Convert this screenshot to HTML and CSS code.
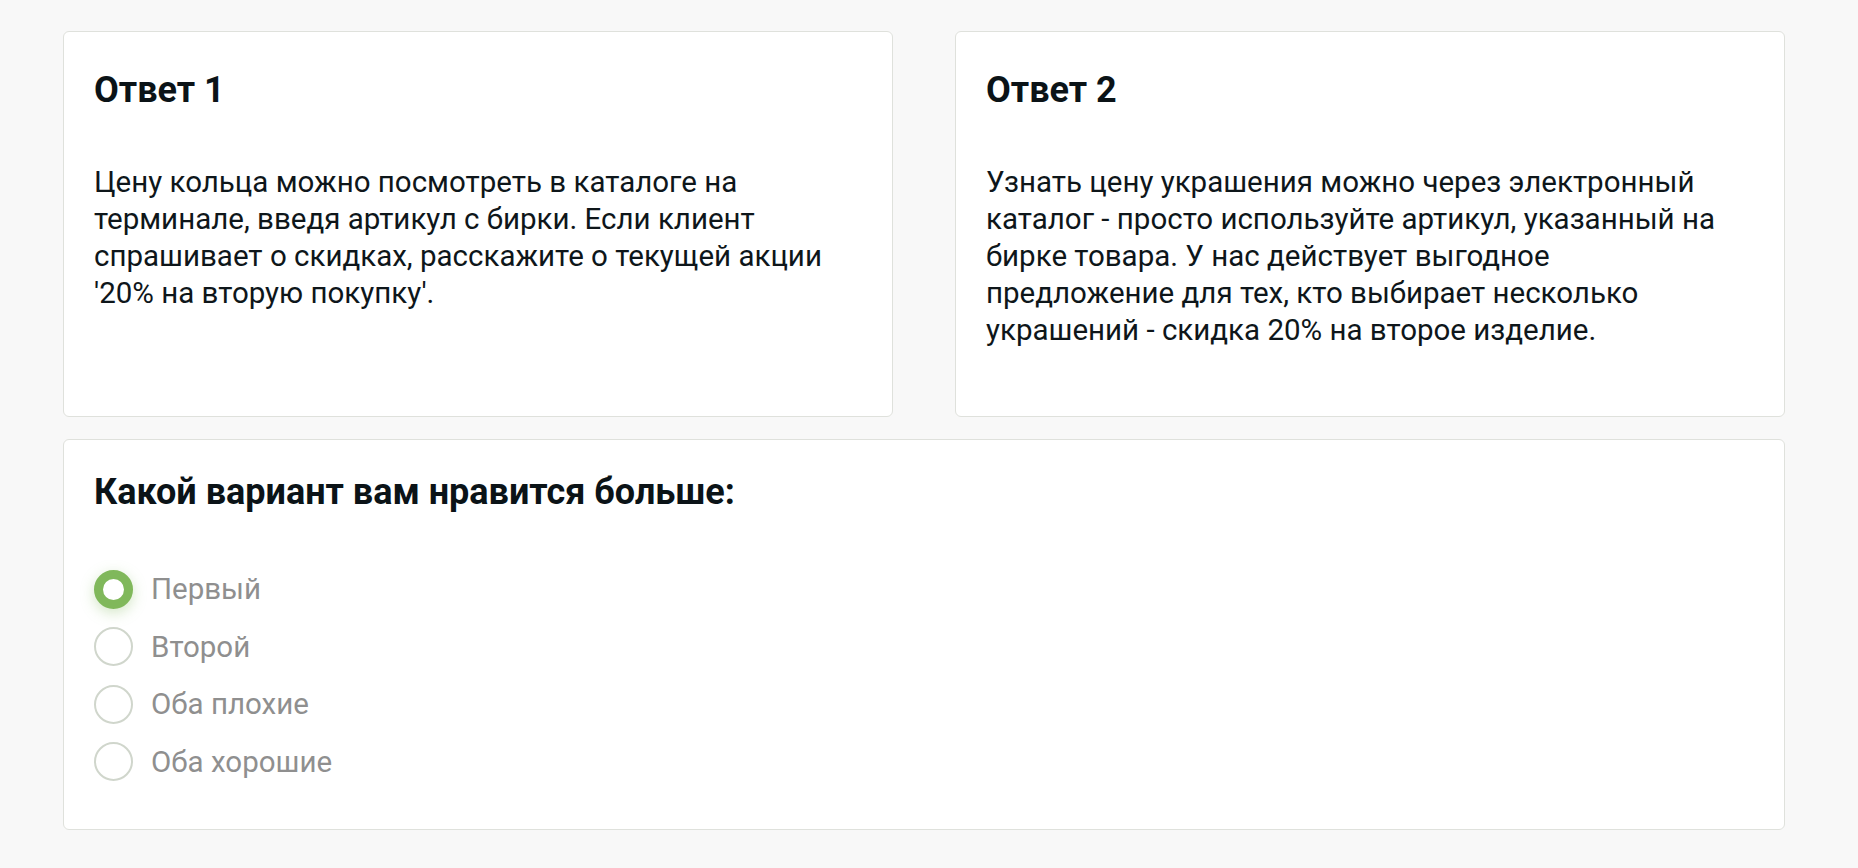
FILE: index.html
```html
<!DOCTYPE html>
<html lang="ru">
<head>
<meta charset="utf-8">
<title>Сравнение ответов</title>
<link rel="stylesheet" href="styles.css">
</head>
<body>
<main class="page">
  <section class="answers">
    <article class="card answer">
      <h2 class="card-title">Ответ 1</h2>
      <p class="answer-text">Цену кольца можно посмотреть в каталоге на терминале, введя артикул с бирки. Если клиент спрашивает о скидках, расскажите о текущей акции '20% на вторую покупку'.</p>
    </article>
    <article class="card answer">
      <h2 class="card-title">Ответ 2</h2>
      <p class="answer-text">Узнать цену украшения можно через электронный каталог - просто используйте артикул, указанный на бирке товара. У нас действует выгодное предложение для тех, кто выбирает несколько украшений - скидка 20% на второе изделие.</p>
    </article>
  </section>
  <section class="card poll">
    <h2 class="poll-title">Какой вариант вам нравится больше:</h2>
    <div class="options">
      <label class="option"><span class="radio checked"></span><span class="option-label">Первый</span></label>
      <label class="option"><span class="radio"></span><span class="option-label">Второй</span></label>
      <label class="option"><span class="radio"></span><span class="option-label">Оба плохие</span></label>
      <label class="option"><span class="radio"></span><span class="option-label">Оба хорошие</span></label>
    </div>
  </section>
</main>
</body>
</html>
```

FILE: styles.css
```css
* { box-sizing: border-box; }
html, body { margin: 0; padding: 0; }
body {
  background: #f8f8f8;
  font-family: Roboto, "Noto Sans", "Liberation Sans", sans-serif;
  color: #0e161a;
}
.page {
  width: 1722px;
  margin-left: 63px;
  padding-top: 31px;
  display: flex;
  flex-direction: column;
  gap: 22px;
}
.answers {
  display: grid;
  grid-template-columns: 830px 830px;
  column-gap: 62px;
}
.card {
  background: #ffffff;
  border: 1px solid #dfe1dc;
  border-radius: 6px;
}
.answer {
  padding: 37px 30px 67px 30px;
}
.card-title, .poll-title {
  margin: 0;
  font-size: 36px;
  line-height: 42px;
  font-weight: 700;
  color: #0b1317;
}
.card-title { margin-bottom: 53px; }
.answer-text {
  margin: 0;
  max-width: 759px;
  font-size: 29.5px;
  line-height: 37px;
  color: #0e161a;
}
.poll {
  padding: 31px 30px 48px 30px;
}
.options {
  margin-top: 57px;
  display: flex;
  flex-direction: column;
  gap: 19.5px;
}
.option {
  display: flex;
  align-items: center;
  gap: 18px;
  height: 38px;
}
.radio {
  width: 39px;
  height: 39px;
  border-radius: 50%;
  border: 2px solid #d0d6cc;
  background: #fff;
  flex: none;
}
.radio.checked {
  border: 9px solid #80b85b;
  box-shadow: 0 4px 14px rgba(128, 184, 91, 0.35);
}
.option-label {
  font-size: 29.5px;
  color: #8f8f8f;
}
```
